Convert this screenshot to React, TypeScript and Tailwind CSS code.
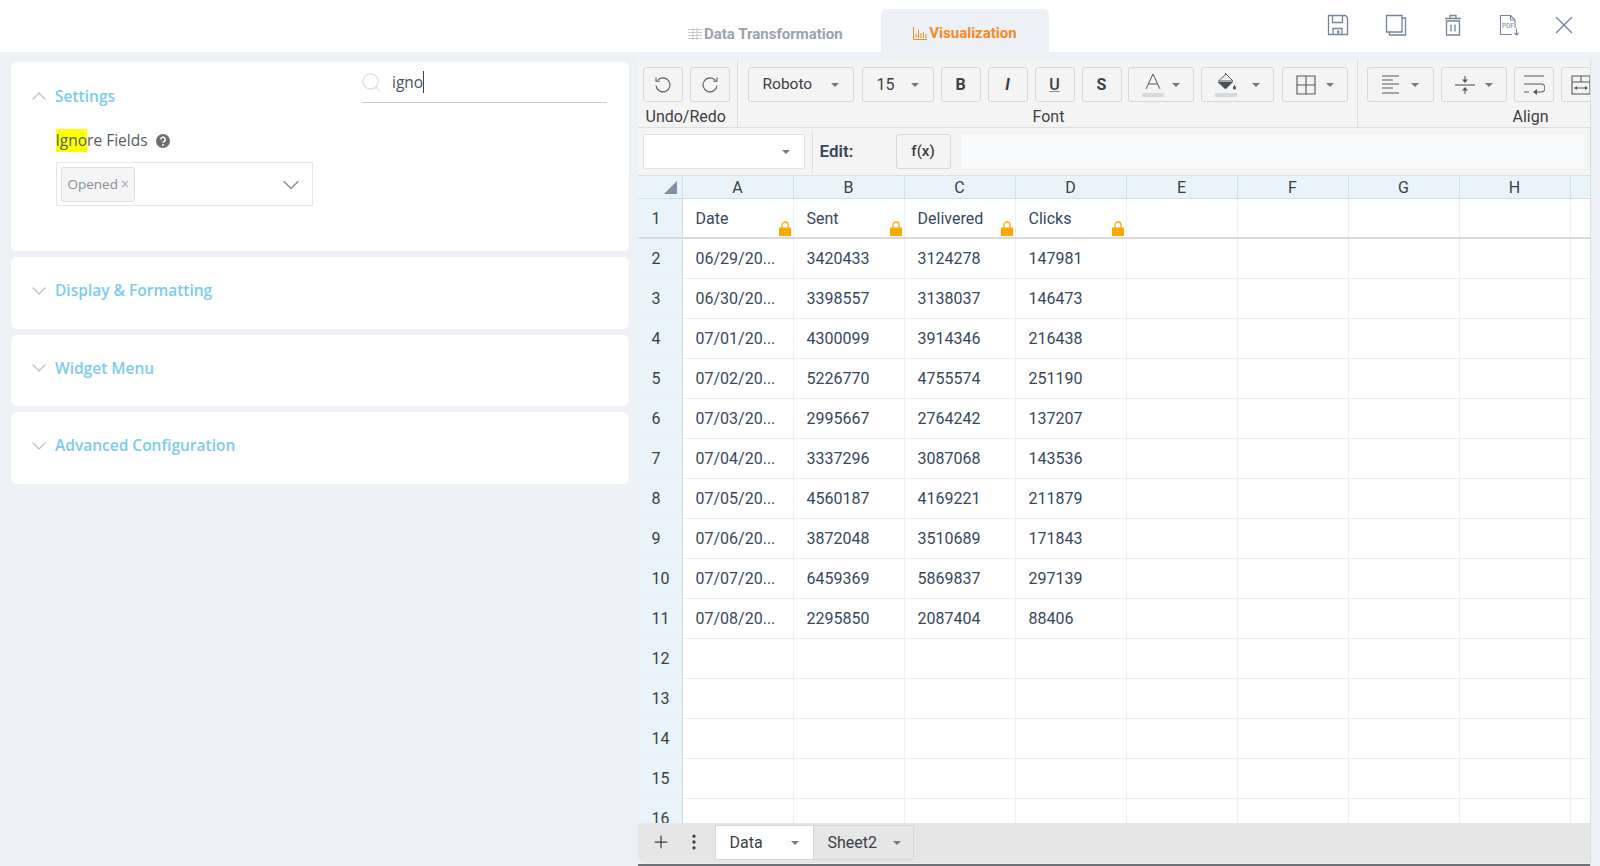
import { ReactNode } from "react";
import { ChevronDown, ChevronUp, Search, Plus, MoreVertical, X } from "lucide-react";

const columns = ["A", "B", "C", "D", "E", "F", "G", "H"];

const rows = [
  ["06/29/20...", "3420433", "3124278", "147981"],
  ["06/30/20...", "3398557", "3138037", "146473"],
  ["07/01/20...", "4300099", "3914346", "216438"],
  ["07/02/20...", "5226770", "4755574", "251190"],
  ["07/03/20...", "2995667", "2764242", "137207"],
  ["07/04/20...", "3337296", "3087068", "143536"],
  ["07/05/20...", "4560187", "4169221", "211879"],
  ["07/06/20...", "3872048", "3510689", "171843"],
  ["07/07/20...", "6459369", "5869837", "297139"],
  ["07/08/20...", "2295850", "2087404", "88406"],
];

function Caret({ className = "" }: { className?: string }) {
  return <span className={`inline-block h-0 w-0 border-x-[4px] border-t-[4px] border-x-transparent border-t-[#77797c] ${className}`} />;
}

function ToolButton({ className = "", children }: { className?: string; children: ReactNode }) {
  return (
    <div className={`flex h-[35px] shrink-0 items-center rounded-[3px] border border-[#d5d7d9] bg-[#f4f4f4] text-[#3d4043] ${className}`}>
      {children}
    </div>
  );
}

function LockIcon() {
  return (
    <svg className="absolute bottom-[1px] right-[2px] h-[15px] w-[12px]" viewBox="0 0 12 15">
      <path d="M3 7V4a3 3 0 0 1 6 0v3" fill="none" stroke="#ffa800" strokeWidth="1.300" />
      <rect x="0" y="6.500" width="12" height="8.500" fill="#ffa800" />
      <rect x="5.500" y="10" width="1" height="1" fill="#fff" />
    </svg>
  );
}

function CollapsedCard({ title }: { title: string }) {
  return (
    <div className="flex h-[71.5px] items-center rounded-[6px] bg-white pb-[4px] pl-[16px]">
      <ChevronDown className="h-[24px] w-[24px] text-[#b9c0c8]" strokeWidth={1.300} />
      <span className="ml-[4px] text-[15.500px] font-semibold text-[#7ccbf0]">{title}</span>
    </div>
  );
}

function TopIcons() {
  return (
    <div className="mb-[3px] ml-auto flex items-center pr-[21px] text-[#76859c]">
      <svg className="h-[22px] w-[22px]" viewBox="0 0 22 22" fill="none" stroke="currentColor" strokeWidth="1.300">
        <path d="M1.500 1.500h17l2 2v17h-19z" />
        <path d="M5.500 1.500v7h10v-7M6 20.500v-6h9v6" />
        <rect x="10" y="16.500" width="2.500" height="3" fill="currentColor" stroke="none" />
      </svg>
      <svg className="ml-[36px] h-[22px] w-[22px]" viewBox="0 0 22 22" fill="none" stroke="currentColor" strokeWidth="1.300">
        <path d="M1.500 1.500h15.500v16.500h-15.500z" />
        <path d="M17 4h3.500v17h-16v-3" />
      </svg>
      <svg className="ml-[37px] h-[22px] w-[18px]" viewBox="0 0 18 22" fill="none" stroke="currentColor" strokeWidth="1.300">
        <path d="M1 4.500h16M6 4V1.500h6V4M2.500 7h13v14h-13z" />
        <path d="M7 10.500v7M11 10.500v7" />
      </svg>
      <svg className="ml-[37px] h-[22px] w-[21px]" viewBox="0 0 21 22" fill="none" stroke="currentColor" strokeWidth="1.100">
        <path d="M13 20.500H1.500V1.500h10l4.500 4.500v8" />
        <path d="M11.500 1.500v4.500h4.500" />
        <path d="M17.500 14.500v6.500M15.500 19l2 2 2-2" />
        <text x="3" y="14" fontSize="6.500" stroke="none" fill="currentColor" fontFamily="Roboto, sans-serif">PDF</text>
      </svg>
      <X className="ml-[29px] h-[30px] w-[30px]" strokeWidth={1.100} />
    </div>
  );
}

function Toolbar() {
  return (
    <div className="flex h-[68px] shrink-0 border-b border-[#dcdedf] text-[16px] text-[#3d4043]">
      <div className="flex w-[100px] shrink-0 flex-col border-r border-[#dcdedf] pl-[5px] pt-[7px]">
        <div className="flex gap-[7px]">
          <ToolButton className="w-[40px] justify-center">
            <svg className="h-[18px] w-[18px]" viewBox="0 0 18 18" fill="none" stroke="#55585b" strokeWidth="1.100">
              <path d="M3.500 4.500A7 7 0 1 1 2 9.500" />
              <path d="M2 1.500v3.800h3.800" />
            </svg>
          </ToolButton>
          <ToolButton className="w-[40px] justify-center">
            <svg className="h-[18px] w-[18px]" viewBox="0 0 18 18" fill="none" stroke="#55585b" strokeWidth="1.100">
              <path d="M14.500 4.500A7 7 0 1 0 16 9.500" />
              <path d="M16 1.500v3.800h-3.800" />
            </svg>
          </ToolButton>
        </div>
        <div className="mt-[5px] pl-[3px] leading-[20px]">Undo/Redo</div>
      </div>
      <div className="flex w-[620px] shrink-0 flex-col border-r border-[#dcdedf] pl-[10px] pt-[7px]">
        <div className="flex">
          <ToolButton className="w-[106px] justify-between px-[14px] text-[15.500px]">
            <span>Roboto</span>
            <Caret />
          </ToolButton>
          <ToolButton className="ml-[8px] w-[72px] justify-between px-[14px]">
            <span>15</span>
            <Caret />
          </ToolButton>
          <ToolButton className="ml-[7px] w-[40px] justify-center font-bold">B</ToolButton>
          <ToolButton className="ml-[7px] w-[40px] justify-center font-bold italic">I</ToolButton>
          <ToolButton className="ml-[7px] w-[40px] justify-center font-medium underline decoration-[#8a8d90]">U</ToolButton>
          <ToolButton className="ml-[7px] w-[40px] justify-center font-bold">S</ToolButton>
          <ToolButton className="ml-[6px] w-[66px] justify-center gap-[8px]">
            <svg className="h-[24px] w-[22px]" viewBox="0 0 22 24" fill="none" stroke="#55585b" strokeWidth="1">
              <path d="M4 16 11 1l7 15M6.500 11h9" />
              <rect x="0" y="20" width="22" height="4" fill="#d5dbe0" stroke="none" />
            </svg>
            <Caret />
          </ToolButton>
          <ToolButton className="ml-[7px] w-[73px] justify-center gap-[15px]">
            <svg className="h-[24px] w-[22px]" viewBox="0 0 22 24">
              <path d="M11 1l7 7H3.500z" fill="none" stroke="#55585b" />
              <path d="M11 1l-1.500-1.500" stroke="#55585b" />
              <path d="M2.500 9h15.500l-6.500 6.500a1.500 1.500 0 0 1-2 0z" fill="#4c4f52" />
              <path d="M19.500 12c1 1.500 1.500 2 1.500 3a1.500 1.500 0 0 1-3 0c0-1 .5-1.500 1.500-3z" fill="#4c4f52" />
              <rect x="0" y="20" width="22" height="4" fill="#d5dbe0" />
            </svg>
            <Caret />
          </ToolButton>
          <ToolButton className="ml-[8px] w-[66px] justify-center gap-[10px]">
            <svg className="h-[20px] w-[20px]" viewBox="0 0 20 20" fill="none" stroke="#55585b" strokeWidth="1.100">
              <path d="M1 1h18v18H1zM10 1v18M1 10h18" />
            </svg>
            <Caret />
          </ToolButton>
        </div>
        <div className="mt-[5px] pl-[285px] leading-[20px]">Font</div>
      </div>
      <div className="flex min-w-0 flex-1 flex-col overflow-hidden pl-[9px] pt-[7px]">
        <div className="flex">
          <ToolButton className="w-[67px] justify-center gap-[10px]">
            <svg className="h-[20px] w-[20px]" viewBox="0 0 20 20" fill="none" stroke="#55585b" strokeWidth="1.100">
              <path d="M1 1h17M1 5h11M1 9h17M1 13h11M1 18h17" />
            </svg>
            <Caret />
          </ToolButton>
          <ToolButton className="ml-[7px] w-[66px] justify-center gap-[10px]">
            <svg className="h-[20px] w-[20px]" viewBox="0 0 20 20" fill="#55585b" stroke="#55585b" strokeWidth="1.100">
              <path d="M0 10h20" />
              <path d="M10 1v5M10 14v5" />
              <path d="M7 4.500h6L10 8zM7 15.500h6L10 12z" stroke="none" />
            </svg>
            <Caret />
          </ToolButton>
          <ToolButton className="ml-[7px] w-[40px] justify-center">
            <svg className="h-[20px] w-[22px]" viewBox="0 0 22 20" fill="none" stroke="#55585b" strokeWidth="1.100">
              <path d="M1 1h20M1 9h17a4 4 0 0 1 0 8h-5M1 17h5" />
              <path d="M14 14v6l-4-3z" fill="#55585b" stroke="none" />
            </svg>
          </ToolButton>
          <ToolButton className="ml-[7px] w-[40px] justify-center">
            <svg className="h-[20px] w-[20px]" viewBox="0 0 20 20" fill="none" stroke="#55585b" strokeWidth="1.100">
              <path d="M1 1h18v18H1zM1 7h18M10 1v6M4 13h12" />
              <path d="M3 13l3-2v4zM17 13l-3-2v4z" fill="#55585b" stroke="none" />
            </svg>
          </ToolButton>
        </div>
        <div className="mt-[5px] pl-[146px] leading-[20px]">Align</div>
      </div>
    </div>
  );
}

function EditRow() {
  return (
    <div className="flex h-[48px] shrink-0 items-center border-b border-[#dcdedf] pl-[5px]">
      <div className="flex h-[35px] w-[162px] shrink-0 items-center justify-end rounded-[2px] border border-[#dce3ea] bg-white pr-[14px]">
        <Caret />
      </div>
      <div className="ml-[7px] h-[42px] w-px bg-[#dcdedf]" />
      <div className="ml-[7px] w-[76px] pt-[1px] text-[17px] font-semibold text-[#37475c]">Edit:</div>
      <ToolButton className="w-[55px] justify-center text-[15px] font-medium">f(x)</ToolButton>
      <div className="ml-[10px] mr-[6px] h-[33px] flex-1 bg-[#f9fafb]" />
    </div>
  );
}

function Grid() {
  const blank = [12, 13, 14, 15, 16];
  return (
    <div className="min-h-0 flex-1 overflow-hidden bg-white text-[16px] text-[#37475c]">
      <div className="flex h-[23px] border-b border-[#cfdfeb] bg-[#e8f3fa]">
        <div className="flex w-[45px] shrink-0 items-center justify-end border-r border-[#cfdfeb] pr-[5px]">
          <span className="h-0 w-0 border-b-[13px] border-l-[13px] border-b-[#7f8fa6] border-l-transparent" />
        </div>
        {columns.map((c) => (
          <div key={c} className="flex w-[111px] shrink-0 items-center justify-center border-r border-[#cfdfeb] pt-[1px] text-[#3d4043]">
            {c}
          </div>
        ))}
      </div>
      <div className="flex h-[40px] border-b-2 border-[#d7dce1]">
        <div className="flex w-[45px] shrink-0 items-center border-r border-[#cfdfeb] bg-[#e8f3fa] pl-[14px] pt-[1px] text-[#3d4043]">1</div>
        {["Date", "Sent", "Delivered", "Clicks", "", "", "", ""].map((h, i) => (
          <div key={i} className="relative flex w-[111px] shrink-0 items-center border-r border-[#edf0f2] pl-[13px] pt-[2px]">
            {h}
            {h && <LockIcon />}
          </div>
        ))}
      </div>
      {rows.map((r, i) => (
        <div key={i} className="flex h-[40px] border-b border-[#edf0f2]">
          <div className="flex w-[45px] shrink-0 items-center border-r border-[#cfdfeb] bg-[#e8f3fa] pl-[14px] text-[#3d4043]">{i + 2}</div>
          {columns.map((c, j) => (
            <div key={c} className="flex w-[111px] shrink-0 items-center border-r border-[#edf0f2] pl-[13px]">
              {r[j]}
            </div>
          ))}
        </div>
      ))}
      {blank.map((n) => (
        <div key={n} className="flex h-[40px] border-b border-[#edf0f2]">
          <div className="flex w-[45px] shrink-0 items-center border-r border-[#cfdfeb] bg-[#e8f3fa] pl-[14px] text-[#3d4043]">{n}</div>
          {columns.map((c) => (
            <div key={c} className="w-[111px] shrink-0 border-r border-[#edf0f2]" />
          ))}
        </div>
      ))}
    </div>
  );
}

function SheetTabs() {
  return (
    <div className="flex h-[40px] shrink-0 items-start rounded-bl-[6px] bg-[#e6e6e6] text-[16px] text-[#3d4043]">
      <Plus className="ml-[13px] mt-[9px] h-[20px] w-[20px]" strokeWidth={1.500} />
      <MoreVertical className="ml-[13px] mt-[9px] h-[20px] w-[20px]" strokeWidth={2} />
      <div className="ml-[11px] mt-[2px] flex h-[35px] w-[99px] items-center justify-between border border-[#d5d7d9] bg-white px-[14px]">
        Data
        <Caret className="border-t-[#9aa6b8]" />
      </div>
      <div className="mt-[2px] flex h-[35px] w-[100px] items-center justify-between border border-l-0 border-[#d5d7d9] bg-[#e6e6e6] pl-[14px] pr-[12px]">
        Sheet2
        <Caret className="border-t-[#9aa6b8]" />
      </div>
    </div>
  );
}

export default function App() {
  return (
    <div className="flex h-[866px] w-[1600px] flex-col overflow-hidden bg-[#edf1f5] font-['Roboto',sans-serif]">
      <div className="flex h-[52px] shrink-0 items-center bg-white">
        <div className="ml-[688px] flex h-full items-end">
          <div className="flex h-[43px] w-[193px] items-center pt-[7px] text-[15px] font-bold text-[#9aa3ad]">
            <svg className="h-[12px] w-[14px]" viewBox="0 0 14 12" fill="none" stroke="#c4c9ce" strokeWidth="1">
              <path d="M0 1.500h14M0 4.500h14M0 7.500h14M0 10.500h14M5 0v12M9 0v12" />
            </svg>
            <span className="ml-[2px]">Data Transformation</span>
          </div>
          <div className="flex h-[43px] w-[168px] items-center justify-center rounded-t-[5px] bg-[#edf1f5] pt-[6px] text-[15px] font-bold text-[#f58a27]">
            <svg className="h-[13px] w-[14px]" viewBox="0 0 14 13" fill="none" stroke="#f58a27" strokeWidth="1">
              <path d="M.5 0v12.500H14M3 11V7M5.500 11V3M8 11V6M10.500 11V5M13 11V7" />
            </svg>
            <span className="ml-[2px]">Visualization</span>
          </div>
        </div>
        <TopIcons />
      </div>

      <div className="flex min-h-0 flex-1">
        <div className="ml-[11px] flex w-[618px] shrink-0 flex-col gap-[6px] pt-[10px] font-['Open_Sans',sans-serif]">
          <div className="h-[189px] rounded-[6px] bg-white pl-[16px]">
            <div className="flex h-[68px]">
              <ChevronUp className="mt-[22px] h-[24px] w-[24px] text-[#b9c0c8]" strokeWidth={1.300} />
              <span className="ml-[4px] mt-[23px] text-[15.500px] font-semibold leading-[22px] text-[#7ccbf0]">Settings</span>
              <div className="ml-auto mr-[22px] flex h-[41px] w-[245px] items-center border-b border-[#c5ccd6]">
                <Search className="-ml-[2px] h-[23px] w-[23px] text-[#dcdedf]" strokeWidth={1.300} />
                <span className="ml-[9px] border-r border-[#37475c] text-[15.500px] leading-[22px] text-[#4a5360]">igno</span>
              </div>
            </div>
            <div className="ml-[28.500px] flex h-[21px] items-center text-[15.500px] text-[#555c66]">
              <span className="bg-[#ffff00]">Igno</span>re Fields
              <svg className="ml-[8px] h-[14px] w-[14px]" viewBox="0 0 14 14">
                <circle cx="7" cy="7" r="7" fill="#6f6f6f" />
                <path d="M4.800 5.400a2.200 2.200 0 1 1 3.300 1.900c-.8.500-1.100.8-1.100 1.500" fill="none" stroke="#fff" strokeWidth="1.500" />
                <circle cx="7" cy="11" r="1" fill="#fff" />
              </svg>
            </div>
            <div className="ml-[28.500px] mt-[11px] flex h-[44px] w-[257px] items-center justify-between border border-[#e3e8ee] pl-[4px] pr-[7px]">
              <div className="flex h-[35px] w-[74px] items-center rounded-[3px] border border-[#dcdedf] bg-[#f5f5f5] pl-[6px] text-[13.500px] text-[#8a8f96]">
                Opened
                <X className="ml-[2px] h-[10px] w-[10px] text-[#bbbfc4]" strokeWidth={4} />
              </div>
              <ChevronDown className="mt-[1px] h-[28px] w-[28px] text-[#7d8794]" strokeWidth={1.100} />
            </div>
          </div>
          <CollapsedCard title="Display & Formatting" />
          <CollapsedCard title="Widget Menu" />
          <CollapsedCard title="Advanced Configuration" />
        </div>

        <div className="ml-[8.500px] mt-[8px] flex w-[953.500px] shrink-0 flex-col overflow-hidden border-r border-[#dcdedf] bg-[#f4f4f4]">
          <Toolbar />
          <EditRow />
          <Grid />
          <SheetTabs />
          <div className="h-[3px] shrink-0 bg-[#edf1f5]">
            <div className="mt-[1px] h-[2px] bg-[#6f7276]" />
          </div>
        </div>
      </div>
    </div>
  );
}
